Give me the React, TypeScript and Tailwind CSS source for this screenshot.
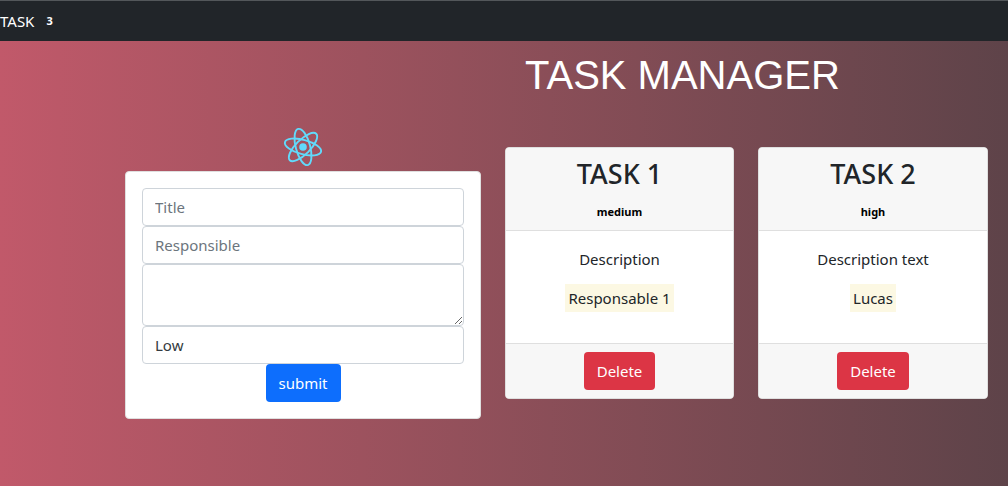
import React from 'react';

type Task = {
  title: string;
  priority: string;
  description: string;
  responsible: string;
};

const tasks: Task[] = [
  { title: 'TASK 1', priority: 'medium', description: 'Description', responsible: 'Responsable 1' },
  { title: 'TASK 2', priority: 'high', description: 'Description text', responsible: 'Lucas' },
];

const field =
  'block w-full appearance-none rounded border border-[#ced4da] bg-white px-3 text-[15px] leading-6 text-[#343a40] placeholder:text-[#6c757d] placeholder:opacity-100';

function ReactLogo() {
  return (
    <svg viewBox="-20 -20 40 40" className="size-10" role="img" aria-label="React">
      <g fill="none" stroke="#61dafb" strokeWidth="1.9" transform="rotate(15)">
        <ellipse rx="18.7" ry="7.2" />
        <ellipse rx="18.7" ry="7.2" transform="rotate(60)" />
        <ellipse rx="18.7" ry="7.2" transform="rotate(120)" />
      </g>
      <circle r="3.8" fill="#61dafb" />
    </svg>
  );
}

function TaskForm() {
  return (
    <form
      className="rounded border border-[#dfdfdf] bg-white p-4 text-center"
      onSubmit={(event) => event.preventDefault()}
    >
      <input className={`${field} h-[38px]`} type="text" aria-label="Title" placeholder="Title" />
      <input className={`${field} h-[38px]`} type="text" aria-label="Responsible" placeholder="Responsible" />
      <textarea className={`${field} h-[62px] resize-y py-1.5`} aria-label="Description" />
      <select className={`${field} h-[38px]`} aria-label="Priority" defaultValue="Low">
        <option>Low</option>
        <option>Medium</option>
        <option>High</option>
      </select>
      <button type="submit" className="mx-auto block h-[38px] rounded bg-[#0d6efd] px-[13px] text-white">
        submit
      </button>
    </form>
  );
}

function TaskCard({ task }: { task: Task }) {
  return (
    <article className="overflow-hidden rounded border border-[#dfdfdf] bg-white text-center">
      <header className="flex h-[83px] flex-col items-center border-b border-[#dfdfdf] bg-[#f7f7f7] pt-2">
        <h3 className="mb-2 text-[27px] leading-9 font-medium">{task.title}</h3>
        <span className="text-[11px] leading-6 font-bold text-black">{task.priority}</span>
      </header>
      <div className="flex h-[112px] flex-col items-center gap-[13px] p-4">
        <p className="leading-6">{task.description}</p>
        <p>
          <mark className="block bg-[#fcf8e3] px-[3px] leading-7 text-[#212529]">{task.responsible}</mark>
        </p>
      </div>
      <footer className="flex justify-center border-t border-[#dfdfdf] bg-[#f7f7f7] py-2">
        <button type="button" className="h-[38px] rounded bg-[#dc3545] px-[13px] text-white">
          Delete
        </button>
      </footer>
    </article>
  );
}

export default function App() {
  return (
    <div className="flex min-h-screen flex-col bg-linear-to-r from-[#c1596a] to-[#5e4349] font-['Noto_Sans',sans-serif] text-[15px] text-[#212529]">
      <nav className="flex h-[41px] items-center border-t border-[#53575a] bg-[#212529] text-white">
        <a href="#tasks" className="flex items-center gap-3">
          TASK
          <span className="text-[11px] font-bold">3</span>
        </a>
      </nav>
      <main
        id="tasks"
        className="grid grid-cols-[356fr_229fr_230fr] items-start gap-x-6 pr-5 pl-[125px]"
      >
        <h1 className="col-span-2 col-start-2 mb-6 h-[62px] pt-2 pl-5 font-['Liberation_Sans',sans-serif] text-[40px] leading-[52px] text-white">
          TASK MANAGER
        </h1>
        <section className="col-start-1 flex flex-col">
          <div className="mb-1 flex justify-center">
            <ReactLogo />
          </div>
          <TaskForm />
        </section>
        {tasks.map((task) => (
          <div key={task.title} className="pt-5">
            <TaskCard task={task} />
          </div>
        ))}
      </main>
    </div>
  );
}
